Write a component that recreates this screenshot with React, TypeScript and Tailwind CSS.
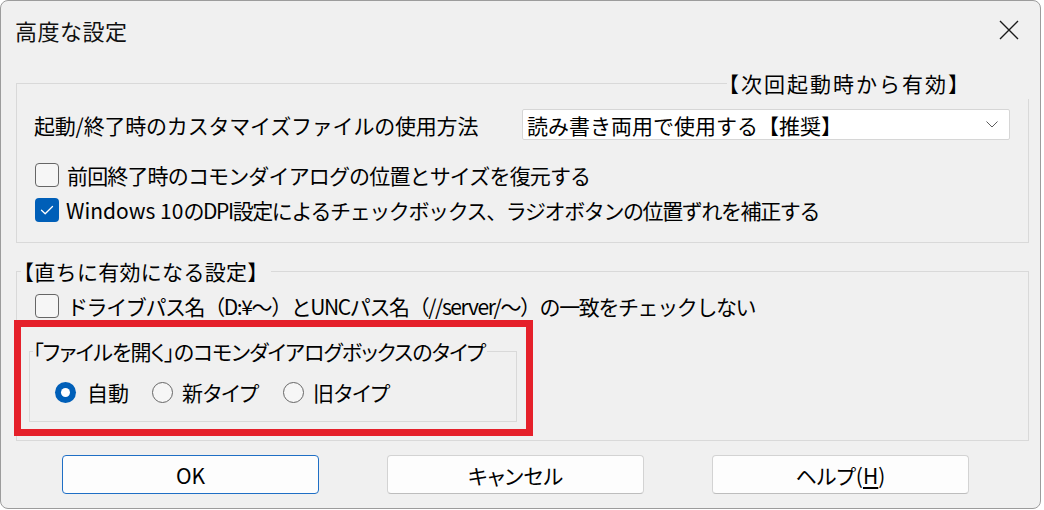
import React from "react";

function Checkbox({ checked }: { checked?: boolean }) {
  if (checked) {
    return (
      <div className="w-[24px] h-[24px] rounded-[4px] bg-[#005fb8] flex items-center justify-center shrink-0">
        <svg width="24" height="24" viewBox="0 0 24 24">
          <path d="M6.5 12.2 L10.2 15.8 L17.5 8.5" fill="none" stroke="#ffffff" strokeWidth="1.3" strokeLinecap="round" strokeLinejoin="round" />
        </svg>
      </div>
    );
  }
  return <div className="w-[24px] h-[24px] rounded-[4px] border border-[#666666] bg-[#f6f6f6] shrink-0" />;
}

function Radio({ checked }: { checked?: boolean }) {
  if (checked) {
    return (
      <div className="w-[21px] h-[21px] rounded-full bg-[#005fb8] flex items-center justify-center shrink-0">
        <div className="w-[9px] h-[9px] rounded-full bg-white" />
      </div>
    );
  }
  return <div className="w-[21px] h-[21px] rounded-full border border-[#666666] bg-[#f6f6f6] shrink-0" />;
}

export default function App() {
  return (
    <div className="w-[1044px] h-[510px] bg-white font-['Noto_Sans_CJK_JP','Noto_Sans',sans-serif] text-[21px] text-black leading-none">
      <div className="w-[1041px] h-[509px] bg-[#f0f0f0] border border-[#9c9c9c] rounded-[8px] flex flex-col overflow-hidden">
        {/* title bar */}
        <div className="h-[58px] flex items-center justify-between pl-[14px] pr-[21px] shrink-0">
          <span className="text-[22px] leading-[26px] tracking-[0.5px] text-[#111111]">高度な設定</span>
          <svg width="20" height="20" viewBox="0 0 20 20">
            <path d="M1 1 L19 19 M19 1 L1 19" stroke="#1a1a1a" strokeWidth="1.4" />
          </svg>
        </div>

        {/* top group */}
        <div className="relative ml-[15px] mt-[24px] w-[1013px] h-[160px] border border-[#d9d9d9] shrink-0">
          <div className="absolute top-[-12px] left-[710px] right-[-2px] h-[27px] bg-[#f0f0f0] leading-[22px] whitespace-nowrap">
            <span className="inline-block -ml-[9px] tracking-[2px]">【次回起動時から有効】</span>
          </div>
          <div className="pt-[25px] pl-[17px] flex items-center">
            <span className="w-[488px] leading-[24px] whitespace-nowrap tracking-[-0.2px]">起動/終了時のカスタマイズファイルの使用方法</span>
            <div className="w-[488px] h-[31px] border border-[#d6d6d6] bg-white rounded-[2px] flex items-center justify-between pl-[4px] pr-[11px]">
              <span className="leading-[24px] whitespace-nowrap">読み書き両用で使用する【推奨】</span>
              <svg width="12" height="7" viewBox="0 0 12 7">
                <path d="M0.5 0.5 L6 6 L11.5 0.5" fill="none" stroke="#5c5c5c" strokeWidth="1" />
              </svg>
            </div>
          </div>
          <div className="mt-[23px] pl-[18px] flex items-center gap-[8px]">
            <Checkbox />
            <span className="leading-[24px] whitespace-nowrap tracking-[-0.85px]">前回終了時のコモンダイアログの位置とサイズを復元する</span>
          </div>
          <div className="mt-[11px] pl-[18px] flex items-center gap-[7px]">
            <Checkbox checked />
            <span className="leading-[24px] whitespace-nowrap">
              <span className="tracking-[0px]">Windows 10</span>
              <span className="tracking-[-1.4px]">のDPI設定によるチェックボックス、ラジオボタンの位置ずれを補正する</span>
            </span>
          </div>
        </div>

        {/* bottom group */}
        <div className="relative ml-[15px] mt-[28px] w-[1013px] h-[170px] border border-[#d9d9d9] shrink-0">
          <div className="absolute top-[-12px] left-[4px] h-[24px] bg-[#f0f0f0] leading-[22px] pr-[2px] whitespace-nowrap">
            <span className="inline-block -ml-[8px] tracking-[0.3px]">【直ちに有効になる設定】</span>
          </div>
          <div className="pt-[22px] pl-[18px] flex items-center gap-[8px]">
            <Checkbox />
            <span className="leading-[24px] whitespace-nowrap tracking-[-1.4px]">ドライブパス名（D:¥～）とUNCパス名（//server/～）の一致をチェックしない</span>
          </div>
          <div className="mt-[2px] -ml-[3px] w-[519px] h-[116px] border-[7px] border-[#e5202a]">
            <div className="relative ml-[8px] mt-[24px] w-[488px] h-[71px] border border-[#d9d9d9]">
              <div className="absolute top-[-12px] left-[3px] h-[22px] bg-[#f0f0f0] leading-[22px] pr-[2px] whitespace-nowrap">
                <span className="inline-block [font-feature-settings:'palt'] tracking-[-0.85px]">「ファイルを開く」のコモンダイアログボックスのタイプ</span>
              </div>
              <div className="pt-[28px] pl-[25px] flex items-center [font-feature-settings:'palt']">
                <div className="w-[97px] flex items-center gap-[11px]">
                  <Radio checked />
                  <span className="leading-[24px]">自動</span>
                </div>
                <div className="w-[131px] flex items-center gap-[9px]">
                  <Radio />
                  <span className="leading-[24px]">新タイプ</span>
                </div>
                <div className="flex items-center gap-[9px]">
                  <Radio />
                  <span className="leading-[24px]">旧タイプ</span>
                </div>
              </div>
            </div>
          </div>
        </div>

        {/* buttons */}
        <div className="mt-[14px] pl-[61px] flex gap-[68px] shrink-0 [font-feature-settings:'palt']">
          <div className="w-[257px] h-[39px] rounded-[4px] border border-[#1f6fc5] bg-[#fdfdfd] flex items-center justify-center leading-[24px]">
            OK
          </div>
          <div className="w-[257px] h-[39px] rounded-[4px] border border-[#d3d3d3] border-b-[#bdbdbd] bg-[#fdfdfd] flex items-center justify-center leading-[24px]">
            キャンセル
          </div>
          <div className="w-[257px] h-[39px] rounded-[4px] border border-[#d3d3d3] border-b-[#bdbdbd] bg-[#fdfdfd] flex items-center justify-center leading-[24px]">
            <span>
              ヘルプ(<span className="underline underline-offset-[3px]">H</span>)
            </span>
          </div>
        </div>
      </div>
    </div>
  );
}
